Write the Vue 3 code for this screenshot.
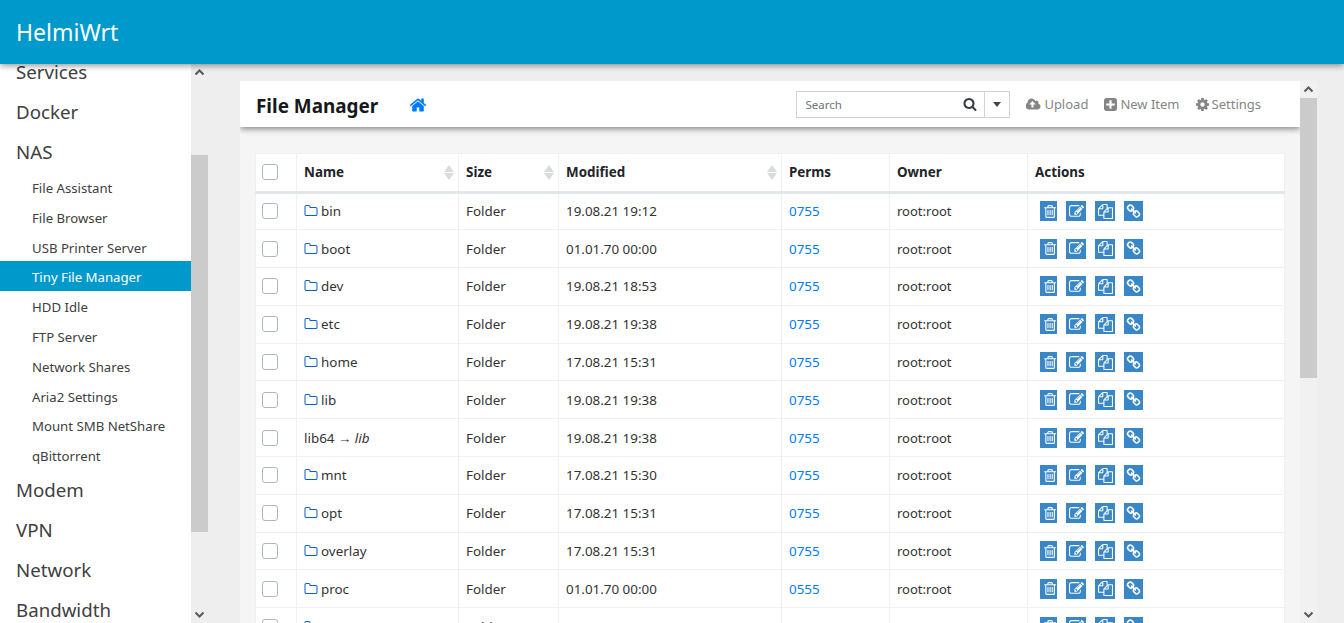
<script setup>
const icons = {
  home: 'M1472 992v480q0 26-19 45t-45 19h-384v-384h-256v384h-384q-26 0-45-19t-19-45v-480q0-1 .5-3t.5-3l575-474 575 474q1 2 1 6zm223-69l-62 74q-8 9-21 11h-3q-13 0-21-7l-692-577-692 577q-12 8-24 7-13-2-21-11l-62-74q-8-10-7-23.500t11-21.500l719-599q32-26 76-26t76 26l244 204v-195q0-14 9-23t23-9h192q14 0 23 9t9 23v408l219 182q10 8 11 21.500t-7 23.500z',
  search: 'M1216 832q0-185-131.500-316.500t-316.500-131.500-316.500 131.500-131.500 316.500 131.500 316.500 316.500 131.500 316.500-131.500 131.500-316.500zm512 832q0 52-38 90t-90 38q-54 0-90-38l-343-342q-179 124-399 124-143 0-273.500-55.500t-225-150-150-225-55.500-273.500 55.500-273.500 150-225 225-150 273.500-55.500 273.500 55.500 225 150 150 225 55.500 273.500q0 220-124 399l343 343q37 37 37 90z',
  upload: 'M1216 864q0-14-9-23l-352-352q-9-9-23-9t-23 9l-351 351q-10 12-10 24 0 14 9 23t23 9h224v352q0 13 9.500 22.500t22.500 9.500h192q13 0 22.500-9.500t9.500-22.500v-352h224q13 0 22.500-9.500t9.500-22.500zm640 288q0 159-112.500 271.500t-271.500 112.500h-1088q-185 0-316.500-131.500t-131.500-316.500q0-130 70-240t188-165q-2-30-2-43 0-212 150-362t362-150q156 0 285.500 87t188.500 231q71-62 166-62 106 0 181 75t75 181q0 76-41 138 130 31 213.500 135.500t83.500 238.500z',
  plus: 'M1408 960v-128q0-26-19-45t-45-19h-320v-320q0-26-19-45t-45-19h-128q-26 0-45 19t-19 45v320h-320q-26 0-45 19t-19 45v128q0 26 19 45t45 19h320v320q0 26 19 45t45 19h128q26 0 45-19t19-45v-320h320q26 0 45-19t19-45zm256-544v960q0 119-84.500 203.500t-203.500 84.500h-960q-119 0-203.500-84.500t-84.500-203.500v-960q0-119 84.500-203.500t203.500-84.500h960q119 0 203.500 84.500t84.500 203.500z',
  cog: 'M1152 896q0-106-75-181t-181-75-181 75-75 181 75 181 181 75 181-75 75-181zm512-109v222q0 12-8 23t-20 13l-185 28q-19 54-39 91 35 50 107 138 10 12 10 25t-9 23q-27 37-99 108t-94 71q-12 0-26-9l-138-108q-44 23-91 38-16 136-29 186-7 28-36 28h-222q-14 0-24.500-8.500t-11.500-21.500l-28-184q-49-16-90-37l-141 107q-10 9-25 9-14 0-25-11-126-114-165-168-7-10-7-23 0-12 8-23 15-21 51-66.500t54-70.500q-27-50-41-99l-183-27q-13-2-21-12.500t-8-23.500v-222q0-12 8-23t19-13l186-28q14-46 39-92-40-57-107-138-10-12-10-24 0-10 9-23 26-36 98.500-107.500t94.500-71.500q13 0 26 10l138 107q44-23 91-38 16-136 29-186 7-28 36-28h222q14 0 24.500 8.500t11.500 21.500l28 184q49 16 90 37l142-107q9-9 24-9 13 0 25 10 129 119 165 170 7 8 7 22 0 12-8 23-15 21-51 66.500t-54 70.500q26 50 41 98l183 28q13 2 21 12.500t8 23.500z',
  folder: 'M1600 1312v-704q0-40-28-68t-68-28h-704q-40 0-68-28t-28-68v-64q0-40-28-68t-68-28h-320q-40 0-68 28t-28 68v960q0 40 28 68t68 28h1216q40 0 68-28t28-68zm128-704v704q0 92-66 158t-158 66h-1216q-92 0-158-66t-66-158v-960q0-92 66-158t158-66h320q92 0 158 66t66 158v32h672q92 0 158 66t66 158z',
  trash: 'M704 736v576q0 14-9 23t-23 9h-64q-14 0-23-9t-9-23v-576q0-14 9-23t23-9h64q14 0 23 9t9 23zm256 0v576q0 14-9 23t-23 9h-64q-14 0-23-9t-9-23v-576q0-14 9-23t23-9h64q14 0 23 9t9 23zm256 0v576q0 14-9 23t-23 9h-64q-14 0-23-9t-9-23v-576q0-14 9-23t23-9h64q14 0 23 9t9 23zm128 724v-948h-896v948q0 22 7 40.500t14.500 27 10.500 8.500h832q3 0 10.500-8.500t14.500-27 7-40.500zm-672-1076h448l-48-117q-7-9-17-11h-317q-10 2-17 11zm928 32v64q0 14-9 23t-23 9h-96v948q0 83-47 143.500t-113 60.500h-832q-66 0-113-58.500t-47-141.500v-952h-96q-14 0-23-9t-9-23v-64q0-14 9-23t23-9h309l70-167q15-37 54-63t79-26h320q40 0 79 26t54 63l70 167h309q14 0 23 9t9 23z',
  edit: 'M888 1184l116-116-152-152-116 116v56h96v96h56zm440-720q-16-16-33 1l-350 350q-17 17-1 33t33-1l350-350q17-17 1-33zm80 594v190q0 119-84.500 203.500t-203.500 84.500h-832q-119 0-203.500-84.500t-84.500-203.500v-832q0-119 84.500-203.500t203.500-84.500h832q63 0 117 25 15 7 18 23 3 17-9 29l-49 49q-14 14-32 8-23-6-45-6h-832q-66 0-113 47t-47 113v832q0 66 47 113t113 47h832q66 0 113-47t47-113v-126q0-13 9-22l64-64q15-15 35-7t20 29zm-96-738l288 288-672 672h-288v-288zm444 132l-92 92-288-288 92-92q28-28 68-28t68 28l152 152q28 28 28 68t-28 68z',
  files: 'M1696 384q40 0 68 28t28 68v1216q0 40-28 68t-68 28h-960q-40 0-68-28t-28-68v-288h-544q-40 0-68-28t-28-68v-672q0-40 20-88t48-76l408-408q28-28 76-48t88-20h416q40 0 68 28t28 68v328q68-40 128-40h416zm-544 213l-299 299h299v-299zm-640-384l-299 299h299v-299zm196 647l316-316v-416h-384v416q0 40-28 68t-68 28h-416v640h512v-256q0-40 20-88t48-76zm956 804v-1152h-384v416q0 40-28 68t-68 28h-416v640h896z',
  link: 'M1456 1216q0-40-28-68l-208-208q-28-28-68-28-42 0-72 32 3 3 19 18.500t21.500 21.500 15 19 13 25.500 3.500 27.500q0 40-28 68t-68 28q-15 0-27.500-3.500t-25.500-13-19-15-21.500-21.500-18.500-19q-33 31-33 73 0 40 28 68l206 207q27 27 68 27 40 0 68-26l147-146q28-28 28-67zm-703-705q0-40-28-68l-206-207q-28-28-68-28-39 0-68 27l-147 146q-28 28-28 67 0 40 28 68l208 208q27 27 68 27 42 0 72-31-3-3-19-18.500t-21.500-21.500-15-19-13-25.500-3.500-27.500q0-40 28-68t68-28q15 0 27.500 3.500t25.500 13 19 15 21.500 21.500 18.500 19q33-31 33-73zm895 705q0 120-85 203l-147 146q-83 83-203 83-121 0-204-85l-206-207q-83-83-83-203 0-123 88-209l-88-88q-86 88-208 88-120 0-204-84l-208-208q-84-84-84-204t85-203l147-146q83-83 203-83 121 0 204 85l206 207q83 83 83 203 0 123-88 209l88 88q86-88 208-88 120 0 204 84l208 208q84 84 84 204z'
}

const subItems = ['File Assistant', 'File Browser', 'USB Printer Server', 'Tiny File Manager', 'HDD Idle', 'FTP Server', 'Network Shares', 'Aria2 Settings', 'Mount SMB NetShare', 'qBittorrent']
const columns = [
  { label: 'Name', sort: true, cls: 'c-name' },
  { label: 'Size', sort: true, cls: 'c-size' },
  { label: 'Modified', sort: true, cls: 'c-mod' },
  { label: 'Perms', sort: false, cls: 'c-perm' },
  { label: 'Owner', sort: false, cls: 'c-own' },
  { label: 'Actions', sort: false, cls: 'c-act' }
]
const rows = [
  { name: 'bin', mod: '19.08.21 19:12', perm: '0755' },
  { name: 'boot', mod: '01.01.70 00:00', perm: '0755' },
  { name: 'dev', mod: '19.08.21 18:53', perm: '0755' },
  { name: 'etc', mod: '19.08.21 19:38', perm: '0755' },
  { name: 'home', mod: '17.08.21 15:31', perm: '0755' },
  { name: 'lib', mod: '19.08.21 19:38', perm: '0755' },
  { name: 'lib64', target: 'lib', mod: '19.08.21 19:38', perm: '0755' },
  { name: 'mnt', mod: '17.08.21 15:30', perm: '0755' },
  { name: 'opt', mod: '17.08.21 15:31', perm: '0755' },
  { name: 'overlay', mod: '17.08.21 15:31', perm: '0755' },
  { name: 'proc', mod: '01.01.70 00:00', perm: '0555' },
  { name: 'rom', mod: '17.08.21 15:30', perm: '0755' }
]
const actions = [
  { icon: 'trash', cls: 'a-trash', box: '0 0 1408 1792' },
  { icon: 'edit', cls: 'a-edit', box: '0 0 1792 1792' },
  { icon: 'files', cls: 'a-files', box: '0 0 1792 1792' },
  { icon: 'link', cls: 'a-link', box: '0 0 1664 1792' }
]
</script>

<template>
  <div class="page">
    <header class="topbar">HelmiWrt</header>
    <div class="body">
      <nav class="sidebar">
        <ul class="menu">
          <li class="top">Services</li>
          <li class="top">Docker</li>
          <li class="top">NAS</li>
          <li v-for="s in subItems" :key="s" class="sub" :class="{ active: s === 'Tiny File Manager' }">{{ s }}</li>
          <li class="top">Modem</li>
          <li class="top">VPN</li>
          <li class="top">Network</li>
          <li class="top">Bandwidth</li>
        </ul>
      </nav>
      <div class="scroll side-scroll">
        <svg class="arrow" viewBox="0 0 17 17"><path d="M4.500 10.500 8.500 6.500l4 4" /></svg>
        <div class="thumb side-thumb"></div>
        <svg class="arrow end" viewBox="0 0 17 17"><path d="M4.500 6.500l4 4 4-4" /></svg>
      </div>
      <main class="main">
        <div class="frame">
          <div class="content">
            <div class="navbar">
              <h1 class="title">File Manager</h1>
              <svg class="home" viewBox="0 0 1792 1792"><path :d="icons.home" /></svg>
              <div class="tools">
                <div class="searchbox">
                  <span class="placeholder">Search</span>
                  <svg class="mag" viewBox="0 0 1792 1792"><path :d="icons.search" /></svg>
                  <span class="drop"><i class="caret"></i></span>
                </div>
                <a class="tool"><svg class="ti-up" viewBox="0 0 1920 1792"><path :d="icons.upload" /></svg>Upload</a>
                <a class="tool"><svg class="ti" viewBox="128 128 1536 1536"><path :d="icons.plus" /></svg>New Item</a>
                <a class="tool"><svg class="ti" viewBox="128 128 1536 1536"><path :d="icons.cog" /></svg>Settings</a>
              </div>
            </div>
            <div class="tablewrap">
              <table class="files">
                <thead>
                  <tr>
                    <th class="c-check"><span class="check"></span></th>
                    <th v-for="c in columns" :key="c.label" :class="c.cls">
                      <div class="thc">
                        <span>{{ c.label }}</span>
                        <span v-if="c.sort" class="sort"><i class="up"></i><i class="down"></i></span>
                      </div>
                    </th>
                  </tr>
                </thead>
                <tbody>
                  <tr v-for="r in rows" :key="r.name">
                    <td class="c-check"><span class="check"></span></td>
                    <td>
                      <template v-if="r.target">{{ r.name }} → <em>{{ r.target }}</em></template>
                      <template v-else><svg class="fold" viewBox="0 0 1792 1792"><path :d="icons.folder" /></svg>{{ r.name }}</template>
                    </td>
                    <td>Folder</td>
                    <td>{{ r.mod }}</td>
                    <td><a class="perm">{{ r.perm }}</a></td>
                    <td class="owner">root:root</td>
                    <td>
                      <div class="acts">
                        <span v-for="a in actions" :key="a.icon" class="act" :class="a.cls">
                          <svg :viewBox="a.box"><path :d="icons[a.icon]" /></svg>
                        </span>
                      </div>
                    </td>
                  </tr>
                </tbody>
              </table>
            </div>
          </div>
          <div class="scroll frame-scroll">
            <svg class="arrow" viewBox="0 0 17 17"><path d="M4.500 10.500 8.500 6.500l4 4" /></svg>
            <div class="thumb frame-thumb"></div>
            <svg class="arrow end" viewBox="0 0 17 17"><path d="M4.500 6.500l4 4 4-4" /></svg>
          </div>
        </div>
      </main>
    </div>
  </div>
</template>

<style scoped>
.page {
  height: 623px;
  width: 1344px;
  display: flex;
  flex-direction: column;
  overflow: hidden;
  background: #eeeeee;
  font-family: "Noto Sans", "Open Sans", sans-serif;
  color: #212529;
}
.topbar {
  height: 64px;
  flex: none;
  background: #0099cc;
  color: #fff;
  font-size: 23px;
  line-height: 64px;
  padding-left: 16px;
  box-shadow: 0 2px 6px rgba(0, 0, 0, 0.4);
  position: relative;
  z-index: 2;
}
.body {
  flex: 1;
  display: flex;
  min-height: 0;
}
.sidebar {
  width: 191px;
  flex: none;
  background: #fff;
  overflow: hidden;
}
.menu {
  list-style: none;
  margin: -12px 0 0;
  padding: 0;
}
.top {
  height: 40px;
  line-height: 40px;
  padding-left: 16px;
  font-size: 18.700px;
  color: #404040;
}
.sub {
  height: 29.800px;
  line-height: 32px;
  padding-left: 32px;
  font-size: 13.200px;
  color: #404040;
}
.sub.active {
  background: #0099cc;
  color: #fff;
}
.scroll {
  width: 17px;
  flex: none;
  display: flex;
  flex-direction: column;
  background: #eeeeee;
}
.arrow {
  width: 17px;
  height: 17px;
  flex: none;
  fill: none;
  stroke: #5a5a5a;
  stroke-width: 2;
}
.arrow.end {
  margin-top: auto;
}
.thumb {
  background: #cbcbcb;
}
.side-thumb {
  margin-top: 74px;
  height: 377px;
}
.main {
  flex: 1;
  min-width: 0;
  padding: 17px 27px 0 32px;
  overflow: hidden;
}
.frame {
  display: flex;
  height: 100%;
}
.content {
  flex: 1;
  min-width: 0;
  background: #f5f5f5;
  overflow: hidden;
}
.frame-scroll {
  background: #f1f1f1;
}
.frame-thumb {
  height: 280px;
}
.navbar {
  height: 46px;
  background: #fff;
  display: flex;
  align-items: center;
  padding-left: 16px;
  box-shadow: 0 2px 6px rgba(0, 0, 0, 0.45);
  position: relative;
}
.title {
  margin: 4px 0 0;
  font-size: 18.900px;
  font-weight: 700;
  color: #16181b;
}
.home {
  width: 18px;
  height: 18px;
  margin: 2px 0 0 31px;
  fill: #007bff;
}
.tools {
  margin-left: auto;
  display: flex;
  align-items: center;
  gap: 16px;
  padding-right: 39px;
  color: #858585;
  font-size: 13px;
}
.searchbox {
  width: 214px;
  height: 27px;
  box-sizing: border-box;
  border: 1px solid #ced4da;
  display: flex;
  align-items: center;
  padding-left: 8px;
  font-size: 11.500px;
  color: #6c757d;
}
.placeholder {
  flex: 1;
}
.mag {
  width: 14px;
  height: 14px;
  fill: #343a40;
  margin-right: 7px;
}
.drop {
  width: 24px;
  height: 100%;
  border-left: 1px solid #ced4da;
  display: flex;
  align-items: center;
  justify-content: center;
}
.caret {
  border-top: 5px solid #444;
  border-left: 4.500px solid transparent;
  border-right: 4.500px solid transparent;
}
.tool {
  display: flex;
  align-items: center;
  gap: 3px;
}
.ti-up {
  width: 15px;
  height: 15px;
  fill: #858585;
}
.ti {
  width: 13px;
  height: 13px;
  fill: #858585;
}
.tablewrap {
  padding: 26px 15px 0 15px;
}
.files {
  width: 1030px;
  table-layout: fixed;
  border-collapse: collapse;
  background: #fff;
  font-size: 13.400px;
}
.files th,
.files td {
  border: 1px solid #f0f0f0;
  padding: 0 7px;
  text-align: left;
  box-sizing: border-box;
}
.files th {
  height: 38.500px;
  font-weight: 700;
  border-bottom: 3px solid #e4e7ea;
  color: #212529;
}
.files td {
  height: 37.800px;
  color: #333;
}
.files td.owner {
  font-size: 13px;
}
.c-check {
  width: 41px;
}
.c-name {
  width: 162px;
}
.c-size {
  width: 100px;
}
.c-mod {
  width: 223px;
}
.c-perm {
  width: 108px;
}
.c-own {
  width: 138px;
}
.thc {
  display: flex;
  align-items: center;
  justify-content: space-between;
}
.sort {
  display: flex;
  flex-direction: column;
  gap: 1px;
  margin-right: -3px;
}
.up {
  border-bottom: 7px solid #d9dcdf;
  border-left: 5px solid transparent;
  border-right: 5px solid transparent;
}
.down {
  border-top: 7px solid #d9dcdf;
  border-left: 5px solid transparent;
  border-right: 5px solid transparent;
}
.check {
  display: block;
  width: 16px;
  height: 16px;
  box-sizing: border-box;
  border: 1px solid #adb5bd;
  border-radius: 3px;
  background: #fff;
  margin-left: -1px;
}
.fold {
  width: 14px;
  height: 14px;
  fill: #0b5fc0;
  vertical-align: -2px;
  margin-right: 3px;
}
.perm {
  color: #007bff;
}
.acts {
  display: flex;
  gap: 9px;
  padding-left: 5px;
}
.act {
  height: 20px;
  background: #3a87c8;
  display: flex;
  align-items: center;
  justify-content: center;
  flex: none;
}
.act svg {
  fill: #fff;
  width: 15px;
  height: 15px;
}
.a-trash {
  width: 17px;
}
.a-edit {
  width: 20px;
}
.a-files {
  width: 20px;
}
.a-link {
  width: 19px;
}
</style>

<style>
html,
body {
  margin: 0;
  overflow: hidden;
}
</style>
